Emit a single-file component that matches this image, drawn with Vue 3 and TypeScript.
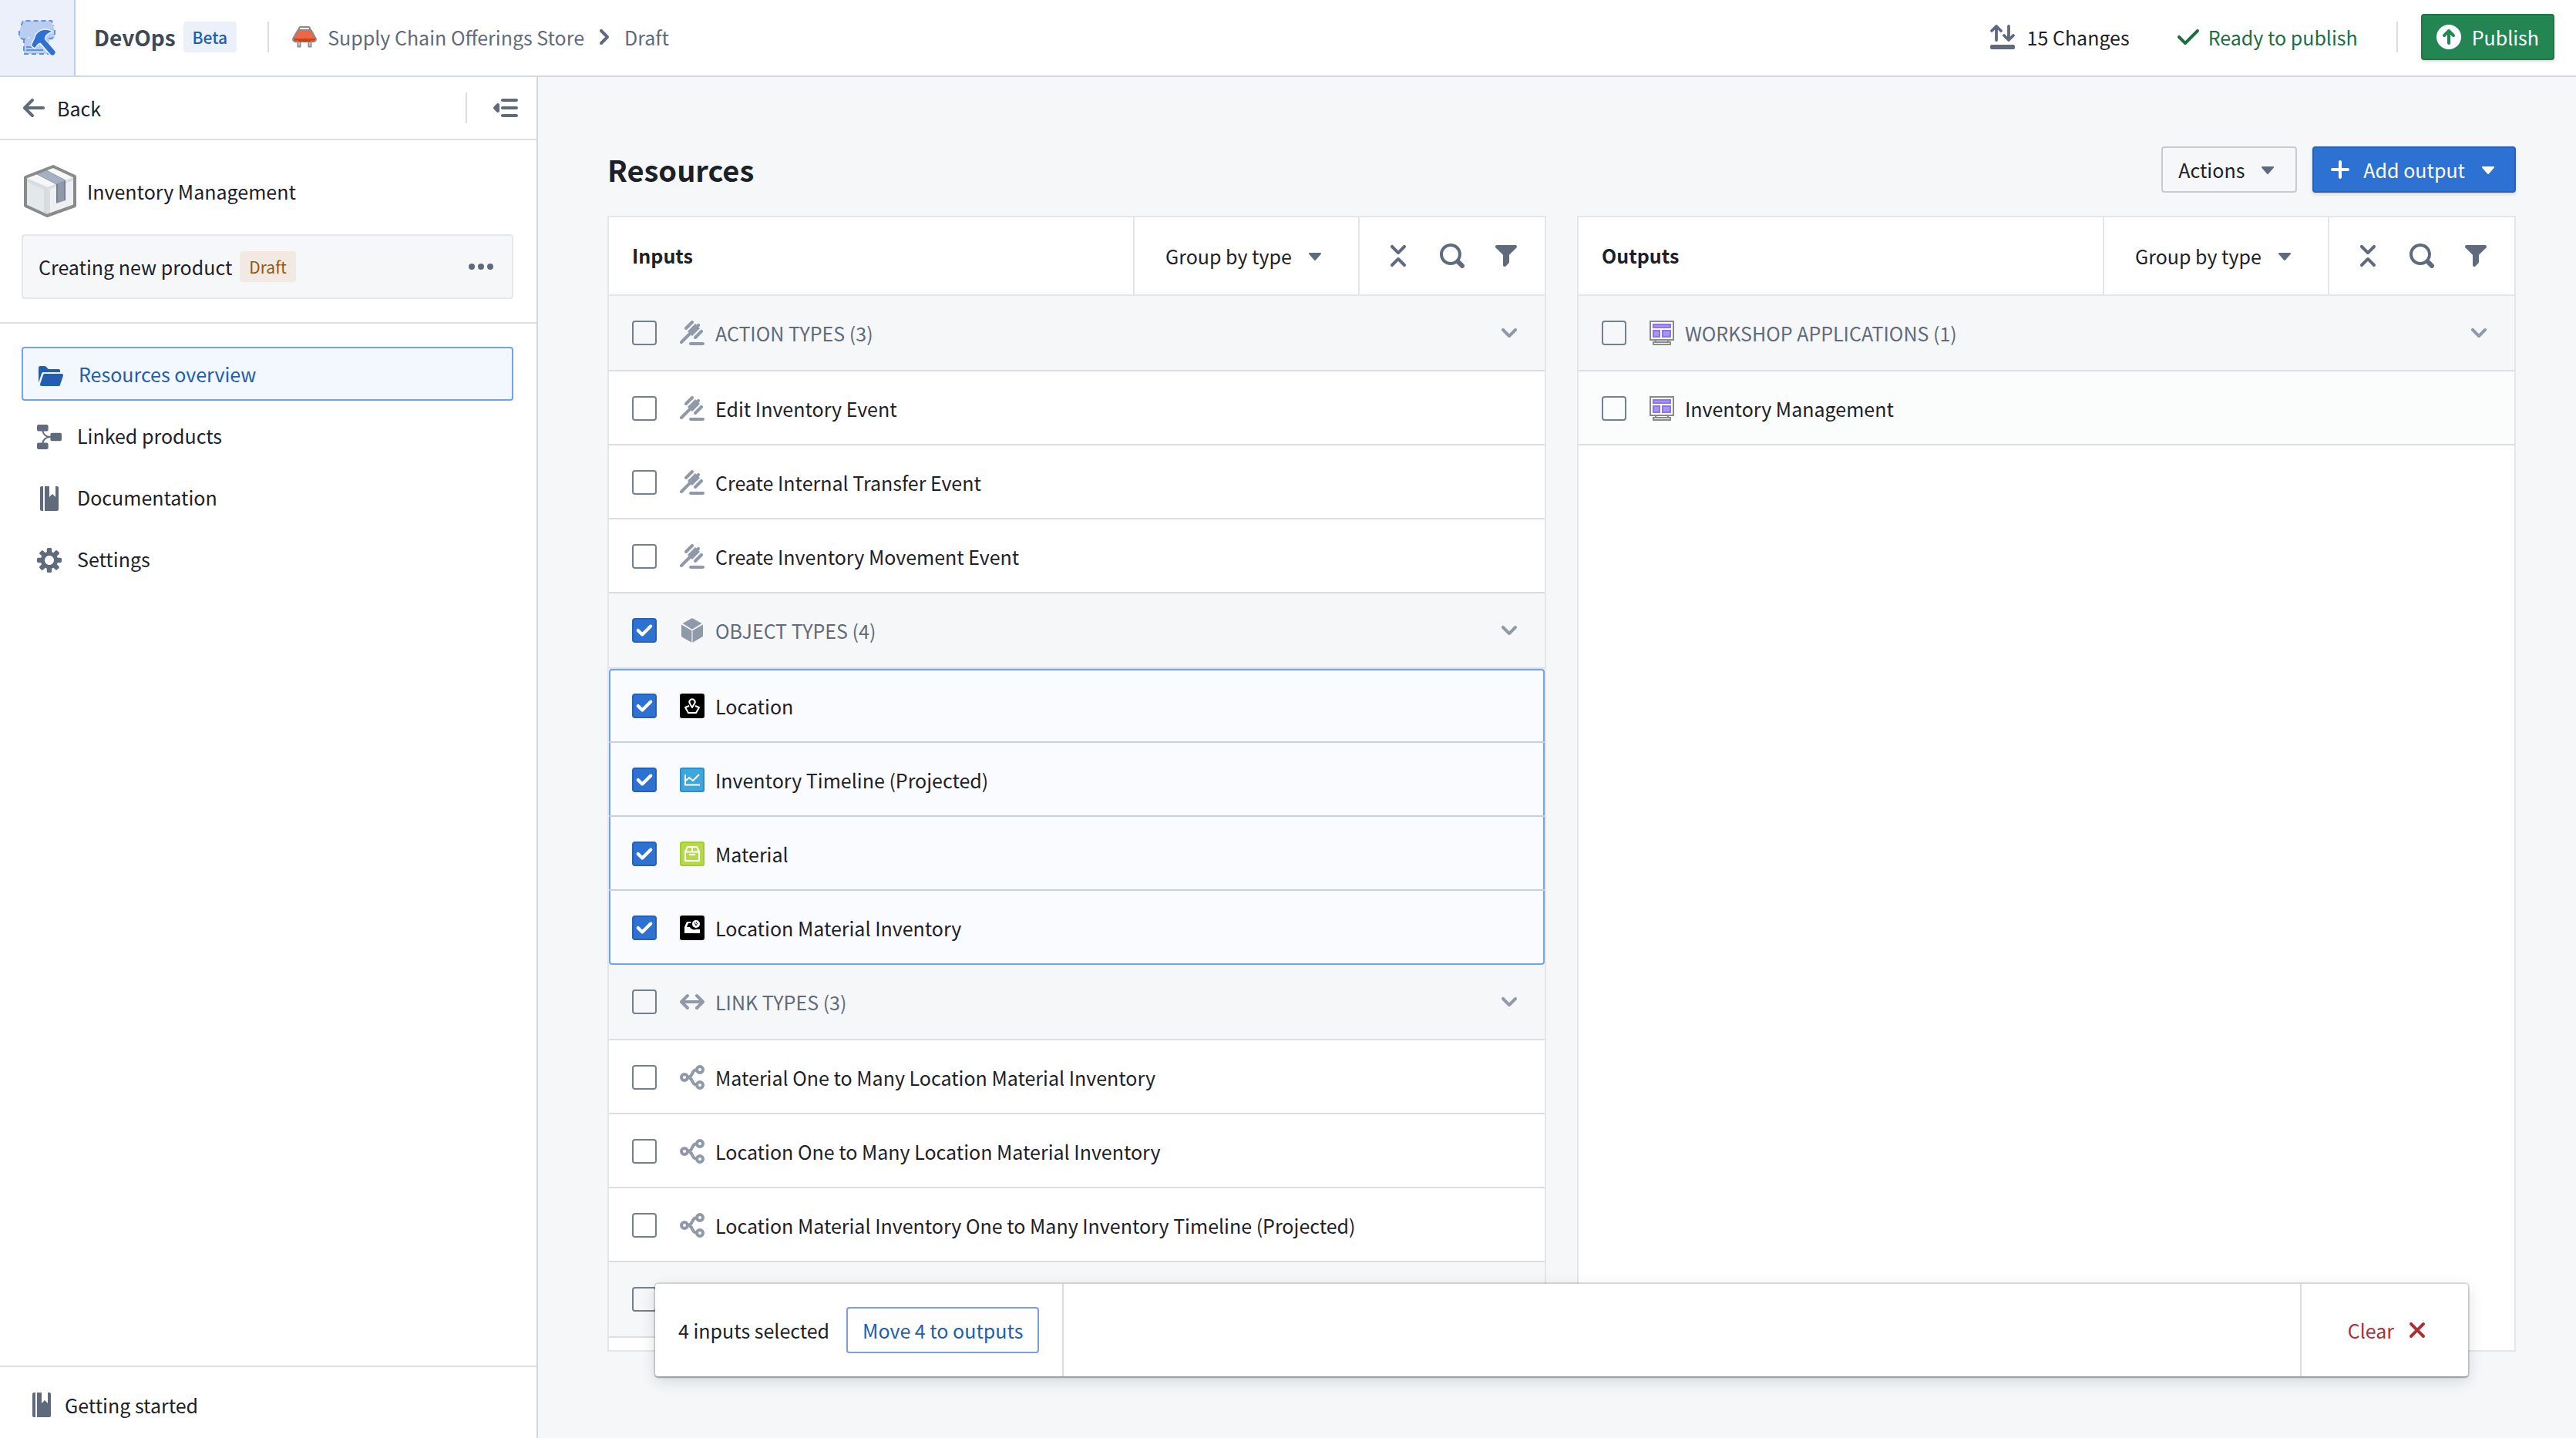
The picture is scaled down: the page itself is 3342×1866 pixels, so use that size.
<script setup lang="ts">
import { h, ref, computed, type FunctionalComponent } from 'vue'

interface IconShape {
  fill?: string
  stroke?: string
  width?: number
}

const shapes: Record<string, IconShape> = {
  arrowLeft: { fill: 'M13.99 6.99H4.41L7.7 3.7a1.003 1.003 0 00-1.42-1.42l-5 5a1.014 1.014 0 000 1.42l5 5a1.003 1.003 0 001.42-1.42L4.41 8.99H14c.55 0 1-.45 1-1s-.46-1-1.01-1z' },
  menuClosed: { fill: 'M6 4h9c.55 0 1-.45 1-1s-.45-1-1-1H6c-.55 0-1 .45-1 1s.45 1 1 1zM15 7H6c-.55 0-1 .45-1 1s.45 1 1 1h9c.55 0 1-.45 1-1s-.45-1-1-1zM15 12H6c-.55 0-1 .45-1 1s.45 1 1 1h9c.55 0 1-.45 1-1s-.45-1-1-1zM3 5c-.28 0-.53.11-.71.29l-2 2C.11 7.47 0 7.72 0 8s.11.53.29.71l2 2c.18.18.43.29.71.29.55 0 1-.45 1-1V6c0-.55-.45-1-1-1z' },
  chevronRight: { fill: 'M10.71 7.29l-4-4a1.003 1.003 0 00-1.42 1.42L8.59 8 5.3 11.29c-.19.18-.3.43-.3.71a1.003 1.003 0 001.71.71l4-4c.18-.18.29-.43.29-.71 0-.28-.11-.53-.29-.71z' },
  chevronDown: { fill: 'M12 5c-.28 0-.53.11-.71.29L8 8.59l-3.29-3.3a1.003 1.003 0 00-1.42 1.42l4 4c.18.18.43.29.71.29s.53-.11.71-.29l4-4A1.003 1.003 0 0012 5z' },
  caret: { fill: 'M12 6.5c0-.28-.22-.5-.5-.5h-7a.495.495 0 00-.37.83l3.5 4c.09.1.22.17.37.17s.28-.07.37-.17l3.5-4c.08-.09.13-.2.13-.33z' },
  search: { fill: 'M15.55 13.43l-2.67-2.68a6.94 6.94 0 001.11-3.76c0-3.87-3.13-7-7-7s-7 3.13-7 7 3.13 7 7 7c1.39 0 2.68-.42 3.76-1.11l2.68 2.67a1.498 1.498 0 102.12-2.12zm-8.56-1.44c-2.76 0-5-2.24-5-5s2.24-5 5-5 5 2.24 5 5-2.24 5-5 5z' },
  filter: { fill: 'M13.99.99h-12a1.003 1.003 0 00-.71 1.71l4.71 4.71V14a1.003 1.003 0 001.71.71l2-2c.18-.18.29-.43.29-.71V7.41L14.7 2.7a1.003 1.003 0 00-.71-1.71z' },
  collapse: { fill: 'M7.29 6.71c.18.18.43.29.71.29s.53-.11.71-.29l4-4a1.003 1.003 0 00-1.42-1.42L8 4.59l-3.29-3.3a1.003 1.003 0 00-1.42 1.42l4 4zm1.42 2.58C8.53 9.11 8.28 9 8 9s-.53.11-.71.29l-4 4a1.003 1.003 0 001.42 1.42L8 11.41l3.29 3.29c.18.19.43.3.71.3a1.003 1.003 0 00.71-1.71l-4-4z' },
  plus: { fill: 'M13 7H9V3c0-.55-.45-1-1-1s-1 .45-1 1v4H3c-.55 0-1 .45-1 1s.45 1 1 1h4v4c0 .55.45 1 1 1s1-.45 1-1V9h4c.55 0 1-.45 1-1s-.45-1-1-1z' },
  tick: { fill: 'M14 3c-.28 0-.53.11-.71.29L6 10.59l-3.29-3.3a1.003 1.003 0 00-1.42 1.42l4 4c.18.18.43.29.71.29s.53-.11.71-.29l8-8A1.003 1.003 0 0014 3z' },
  cross: { fill: 'M9.41 8l3.29-3.29c.19-.18.3-.43.3-.71a1.003 1.003 0 00-1.71-.71L8 6.59l-3.29-3.3a1.003 1.003 0 00-1.42 1.42L6.59 8 3.3 11.29c-.19.18-.3.43-.3.71a1.003 1.003 0 001.71.71L8 9.41l3.29 3.29c.18.19.43.3.71.3a1.003 1.003 0 00.71-1.71L9.41 8z' },
  cog: { fill: 'M15.19 6.39h-1.85c-.11-.37-.27-.71-.45-1.04l1.36-1.36c.31-.31.31-.82 0-1.13l-1.13-1.13a.803.803 0 00-1.13 0l-1.36 1.36c-.33-.17-.67-.33-1.04-.44V.79c0-.44-.36-.8-.8-.8h-1.6c-.44 0-.8.36-.8.8v1.86c-.39.12-.75.28-1.1.47l-1.3-1.3c-.3-.3-.79-.3-1.09 0L1.82 2.91c-.3.3-.3.79 0 1.09l1.3 1.3c-.2.34-.36.7-.48 1.09H.79c-.44 0-.8.36-.8.8v1.6c0 .44.36.8.8.8h1.85c.11.37.27.71.45 1.04l-1.36 1.36c-.31.31-.31.82 0 1.13l1.13 1.13c.31.31.82.31 1.13 0l1.36-1.36c.33.18.67.33 1.04.44v1.86c0 .44.36.8.8.8h1.6c.44 0 .8-.36.8-.8v-1.86c.39-.12.75-.28 1.1-.47l1.3 1.3c.3.3.79.3 1.09 0l1.09-1.09c.3-.3.3-.79 0-1.09l-1.3-1.3c.19-.35.36-.71.48-1.1h1.85c.44 0 .8-.36.8-.8v-1.6a.816.816 0 00-.81-.79zM8 11c-1.66 0-3-1.34-3-3s1.34-3 3-3 3 1.34 3 3-1.34 3-3 3z' },
  book: { fill: 'M2 1v14c0 .55.45 1 1 1h1V0H3c-.55 0-1 .45-1 1zm11-1h-1v7l-2-2-2 2V0H5v16h8c.55 0 1-.45 1-1V1c0-.55-.45-1-1-1z' },
  folderOpen: { fill: 'M2.06 6.73c.15-.42.54-.73 1-.73H14V5c0-.55-.45-1-1-1H6.41l-1.7-1.71A.997.997 0 004 2H1c-.55 0-1 .45-1 1v9.84l2.05-6.15.01.04zM16 7.95c0-.55-.45-.95-1-.95H4c-.43 0-.8.28-.94.66l-2 6 .01.01C1.03 13.78 1 13.88 1 14c0 .55.45 1 1 1h11c.43 0 .8-.28.94-.66l2-6h-.01c.04-.11.07-.22.07-.39z' },
  lineage: {
    fill: 'M1 0h5.3a1 1 0 011 1v2.2a1 1 0 01-1 1H1a1 1 0 01-1-1V1a1 1 0 011-1zM9.7 5.4H15a1 1 0 011 1v3.2a1 1 0 01-1 1H9.7a1 1 0 01-1-1V6.4a1 1 0 011-1zM1 11.8h5.3a1 1 0 011 1V15a1 1 0 01-1 1H1a1 1 0 01-1-1v-2.2a1 1 0 011-1z',
    stroke: 'M3.7 4C3.9 6 5.5 8 8.7 8M3.7 12C3.9 10 5.5 8 8.7 8',
    width: 1,
  },
  more: { fill: 'M2 6a2 2 0 100 4 2 2 0 000-4zM8 6a2 2 0 100 4 2 2 0 000-4zM14 6a2 2 0 100 4 2 2 0 000-4z' },
  changes: {
    fill: 'M1 13h14a1 1 0 011 1v1a1 1 0 01-1 1H1a1 1 0 01-1-1v-1a1 1 0 011-1z',
    stroke: 'M4 10V1.5M1 4l3-3 3 3M12 1v8.500M9 7l3 3 3-3',
    width: 1.9,
  },
  action: { fill: 'M9 11a1.003 1.003 0 001.71.71l4-4a1.003 1.003 0 00-1.42-1.42l-4 4c-.18.18-.29.43-.29.71zM4 6c.28 0 .53-.11.71-.29l4-4A1.003 1.003 0 007.29.29l-4 4A1.003 1.003 0 004 6zm4 4l5-5-.79-.79.5-.5a1.003 1.003 0 00-1.42-1.42l-.5.5L10 2 5 7l.79.79-5.5 5.5a1.003 1.003 0 001.42 1.42l5.5-5.5L8 10zm7 4H7c-.55 0-1 .45-1 1s.45 1 1 1h8c.55 0 1-.45 1-1s-.45-1-1-1z' },
  cube: { fill: 'M14.194 3.54L8 7.41 1.806 3.54 7.504.283a1 1 0 01.992 0l5.698 3.255zm.75.71a.99.99 0 01.056.329v6.842a1 1 0 01-.504.868L8.3 15.9V8.1l6.644-3.85zM1.056 4.25L7.7 8.1v7.8l-6.196-3.511A1 1 0 011 11.521V4.579a.99.99 0 01.056-.33z' },
  arrows: { fill: 'M15.7 7.3l-4-4c-.2-.2-.4-.3-.7-.3-.6 0-1 .5-1 1 0 .3.1.5.3.7L12.6 7H3.4l2.3-2.3c.2-.2.3-.4.3-.7 0-.5-.4-1-1-1-.3 0-.5.1-.7.3l-4 4c-.2.2-.3.4-.3.7s.1.5.3.7l4 4c.2.2.4.3.7.3.6 0 1-.4 1-1 0-.3-.1-.5-.3-.7L3.4 9h9.2l-2.3 2.3c-.2.2-.3.4-.3.7 0 .6.4 1 1 1 .3 0 .5-.1.7-.3l4-4c.2-.2.3-.4.3-.7s-.1-.5-.3-.7z' },
  link: {
    stroke: 'M5 8a2 2 0 11-4 0 2 2 0 014 0zM15 3a2 2 0 11-4 0 2 2 0 014 0zM15 13a2 2 0 11-4 0 2 2 0 014 0zM5 8h.5C8.5 8 7.5 3 11 3M5 8h.5c3 0 2 5 5.5 5',
    width: 2,
  },
}

const Icon: FunctionalComponent<{ name: string }> = (props) => {
  const shape = shapes[props.name]
  return h('svg', { viewBox: '0 0 16 16', class: 'icon', 'aria-hidden': 'true' }, [
    shape.fill ? h('path', { d: shape.fill, fill: 'currentColor' }) : null,
    shape.stroke
      ? h('path', {
          d: shape.stroke,
          fill: 'none',
          stroke: 'currentColor',
          'stroke-width': shape.width,
          'stroke-linecap': 'round',
          'stroke-linejoin': 'round',
        })
      : null,
  ])
}
Icon.props = ['name']

interface Item {
  name: string
  icon: string
  checked: boolean
}

interface Group {
  label: string
  icon: string
  checked: boolean
  items: Item[]
}

interface Panel {
  title: string
  kind: 'inputs' | 'outputs'
  groups: Group[]
}

const item = (name: string, icon: string, checked = false): Item => ({ name, icon, checked })

const panels = ref<Panel[]>([
  {
    title: 'Inputs',
    kind: 'inputs',
    groups: [
      {
        label: 'ACTION TYPES (3)',
        icon: 'action',
        checked: false,
        items: [
          item('Edit Inventory Event', 'action'),
          item('Create Internal Transfer Event', 'action'),
          item('Create Inventory Movement Event', 'action'),
        ],
      },
      {
        label: 'OBJECT TYPES (4)',
        icon: 'cube',
        checked: true,
        items: [
          item('Location', 'place', true),
          item('Inventory Timeline (Projected)', 'timeline', true),
          item('Material', 'box', true),
          item('Location Material Inventory', 'stock', true),
        ],
      },
      {
        label: 'LINK TYPES (3)',
        icon: 'arrows',
        checked: false,
        items: [
          item('Material One to Many Location Material Inventory', 'link'),
          item('Location One to Many Location Material Inventory', 'link'),
          item('Location Material Inventory One to Many Inventory Timeline (Projected)', 'link'),
        ],
      },
      { label: '', icon: '', checked: false, items: [] },
    ],
  },
  {
    title: 'Outputs',
    kind: 'outputs',
    groups: [
      {
        label: 'WORKSHOP APPLICATIONS (1)',
        icon: 'workshop',
        checked: false,
        items: [item('Inventory Management', 'workshop')],
      },
    ],
  },
])

const nav = [
  { label: 'Resources overview', icon: 'folderOpen', active: true },
  { label: 'Linked products', icon: 'lineage', active: false },
  { label: 'Documentation', icon: 'book', active: false },
  { label: 'Settings', icon: 'cog', active: false },
]

const selectedItems = computed(() => panels.value[0].groups.flatMap((g) => g.items).filter((i) => i.checked))

function toggleGroup(group: Group) {
  group.items.forEach((i) => (i.checked = group.checked))
}

function clearSelection() {
  panels.value[0].groups.forEach((g) => {
    g.checked = false
    toggleGroup(g)
  })
}
</script>

<template>
  <div class="app">
    <header class="topbar">
      <a href="#" class="logo" aria-label="DevOps home">
        <svg viewBox="0 0 48 46" aria-hidden="true">
          <path d="M7 24h33v20H7z" fill="#b8cdf0" />
          <path d="M6 1h37l4 14v4a6 6 0 01-12 2 6 6 0 01-11 0 6 6 0 01-11 0A6 6 0 011 19v-4z" fill="#b8cdf0" />
          <path d="M7 24v20h33M3.500 7L6 1h37l2.500 7M1 14v5a6 6 0 009 5M47 13v6a6 6 0 01-7 5v4" fill="none" stroke="#5f95dd" stroke-width="2" stroke-dasharray="6 4" />
          <path d="M10 35h8M10 39h22" stroke="#5f95dd" stroke-width="2" />
          <path d="M32 29l12 13" stroke="#ebf0fb" stroke-width="10" stroke-linecap="round" />
          <path d="M43 15C36 11 28 12 23 19l-2 5-4 9 4 3 4-5 6-3 3-4c0-4 3-7 9-9z" fill="#2d72d2" stroke="#ebf0fb" stroke-width="3" paint-order="stroke" stroke-linejoin="round" />
          <path d="M31 27l13 15" stroke="#2d72d2" stroke-width="7" stroke-linecap="round" />
        </svg>
      </a>
      <strong class="app-name">DevOps</strong>
      <span class="tag tag-blue">Beta</span>
      <span class="rule"></span>
      <nav class="crumbs" aria-label="Breadcrumb">
        <svg class="store" viewBox="0 0 32 28" aria-hidden="true">
          <path d="M7.5 19v7.500h3V19M21.5 19v7.500h3V19" fill="#fff" stroke="#8a8a8a" stroke-width="2" />
          <path d="M9 5V3c0-1 1-2 2-2h10c1 0 2 1 2 2v2" fill="#fff" stroke="#8a8a8a" stroke-width="2" />
          <path d="M7.5 5h17L31 16.500c0 3-3 4-5 3.500H6c-2 .5-5-.5-5-3.500z" fill="#eb6847" stroke="#8a8a8a" stroke-width="2" stroke-linejoin="round" />
          <path d="M2 16h28c0 2.500-3 4-5 2-2 3-4 3-5 1-1 2-6 2-7 0-1 2-4 2-6-1-2 2-5 .5-5-2z" fill="#d33d17" />
        </svg>
        <a href="#">Supply Chain Offerings Store</a>
        <Icon name="chevronRight" />
        <a href="#">Draft</a>
      </nav>
      <div class="top-actions">
        <button type="button" class="plain changes"><Icon name="changes" />15 Changes</button>
        <span class="ready"><Icon name="tick" />Ready to publish</span>
        <span class="rule"></span>
        <button type="button" class="btn btn-green">
          <svg class="icon" viewBox="0 0 16 16" aria-hidden="true">
            <circle cx="8" cy="8" r="8" fill="#fff" />
            <path d="M8 12V4.500M5 7l3-3 3 3" fill="none" stroke="#238551" stroke-width="2" stroke-linecap="round" stroke-linejoin="round" />
          </svg>
          Publish
        </button>
      </div>
    </header>

    <div class="body">
      <aside class="sidebar">
        <div class="back-row">
          <button type="button" class="plain back"><Icon name="arrowLeft" />Back</button>
          <span class="rule"></span>
          <button type="button" class="plain" aria-label="Collapse sidebar"><Icon name="menuClosed" /></button>
        </div>

        <section class="product">
          <div class="product-name">
            <svg viewBox="0 0 68 68" aria-hidden="true">
              <path d="M38 2l28 13v38L30 66 2 53V16z" fill="#edeff2" />
              <path d="M38 2l28 13-36 14L2 16z" fill="#f6f7f9" />
              <path d="M2 16l28 12v38L2 53z" fill="#e5e8eb" />
              <path d="M4 18l26 11 35-13v4L34 31v33l-4 1-4-2V32L4 22z" fill="#d3d8de" opacity=".75" />
              <path d="M17 12l12-5 25 13-12 5z" fill="#a5b0c0" stroke="#8f9db0" stroke-width="1" />
              <path d="M42 25l12-5v26l-12 4z" fill="#8f99a8" />
              <path d="M43 25v24M53 21v25" stroke="#738091" stroke-width="2" />
              <path d="M38 2l28 13v38L30 66 2 53V16z" fill="none" stroke="#8a8a8a" stroke-width="4" stroke-linejoin="round" />
            </svg>
            <span>Inventory Management</span>
          </div>
          <div class="draft-card">
            <span>Creating new product</span>
            <span class="tag tag-orange">Draft</span>
            <button type="button" class="plain more" aria-label="More"><Icon name="more" /></button>
          </div>
        </section>

        <nav class="nav" aria-label="Product">
          <a v-for="entry in nav" :key="entry.label" href="#" :class="{ active: entry.active }">
            <Icon :name="entry.icon" />{{ entry.label }}
          </a>
        </nav>

        <a href="#" class="getting-started"><Icon name="book" />Getting started</a>
      </aside>

      <main class="main">
        <div class="title-row">
          <h1>Resources</h1>
          <button type="button" class="btn btn-outline">Actions<Icon name="caret" /></button>
          <button type="button" class="btn btn-blue"><Icon name="plus" />Add output<Icon name="caret" /></button>
        </div>

        <div class="panels">
          <section v-for="panel in panels" :key="panel.title" class="panel" :class="panel.kind">
            <header class="panel-head">
              <h2>{{ panel.title }}</h2>
              <div class="group-by">
                <select :aria-label="panel.title + ' grouping'">
                  <option>Group by type</option>
                </select>
                <Icon name="caret" />
              </div>
              <div class="tools">
                <button type="button" class="plain" aria-label="Collapse all"><Icon name="collapse" /></button>
                <button type="button" class="plain" aria-label="Search"><Icon name="search" /></button>
                <button type="button" class="plain" aria-label="Filter"><Icon name="filter" /></button>
              </div>
            </header>

            <div v-for="(group, gi) in panel.groups" :key="gi" class="group">
              <div class="row group-head">
                <label>
                  <span class="check">
                    <input v-model="group.checked" type="checkbox" @change="toggleGroup(group)" />
                    <Icon name="tick" />
                  </span>
                  <svg v-if="group.icon === 'workshop'" class="icon" viewBox="0 0 32 32" aria-hidden="true">
                    <path d="M1 1h30v24H1z" fill="#fff" stroke="#8a8a8a" stroke-width="2" />
                    <path d="M4 4h24v6H4zM4 12h10v10H4zM16 12h12v10H16z" fill="#8f75e0" />
                    <path d="M6 6h20v2H6zM6 14h6v6H6zM18 14h8v6h-8z" fill="#a792f5" />
                    <path d="M12 25h-4v2M20 25h4v2M5 28h22v3H5z" fill="#fff" stroke="#8a8a8a" stroke-width="2" />
                  </svg>
                  <Icon v-else-if="group.icon" :name="group.icon" />
                  <span>{{ group.label }}</span>
                </label>
                <button type="button" class="plain" aria-label="Toggle group"><Icon name="chevronDown" /></button>
              </div>
              <ul v-if="group.items.length" :class="{ selected: group.items.every((i) => i.checked) }">
                <li v-for="entry in group.items" :key="entry.name" class="row">
                  <label>
                    <span class="check">
                      <input v-model="entry.checked" type="checkbox" />
                      <Icon name="tick" />
                    </span>
                    <svg v-if="entry.icon === 'workshop'" class="icon" viewBox="0 0 32 32" aria-hidden="true">
                      <path d="M1 1h30v24H1z" fill="#fff" stroke="#8a8a8a" stroke-width="2" />
                      <path d="M4 4h24v6H4zM4 12h10v10H4zM16 12h12v10H16z" fill="#8f75e0" />
                      <path d="M6 6h20v2H6zM6 14h6v6H6zM18 14h8v6h-8z" fill="#a792f5" />
                      <path d="M12 25h-4v2M20 25h4v2M5 28h22v3H5z" fill="#fff" stroke="#8a8a8a" stroke-width="2" />
                    </svg>
                    <svg v-else-if="entry.icon === 'place'" class="icon" viewBox="0 0 32 32" aria-hidden="true">
                      <rect width="32" height="32" rx="3" fill="#000" />
                      <path d="M16 18l-3-5a3.600 3.600 0 116 0z" fill="none" stroke="#fff" stroke-width="2" stroke-linejoin="round" />
                      <path d="M12 16l-5 2 4 7h10l4-7-5-2" fill="none" stroke="#fff" stroke-width="2" stroke-linejoin="round" />
                    </svg>
                    <svg v-else-if="entry.icon === 'timeline'" class="icon" viewBox="0 0 32 32" aria-hidden="true">
                      <rect x="1" y="1" width="30" height="30" rx="2" fill="#3fa6da" stroke="#2592cd" stroke-width="2" />
                      <path d="M7 9v13.500h19" fill="none" stroke="#fff" stroke-width="2" />
                      <path d="M8 17l4-4 5 4 8-8" fill="none" stroke="#fff" stroke-width="2" />
                    </svg>
                    <svg v-else-if="entry.icon === 'box'" class="icon" viewBox="0 0 32 32" aria-hidden="true">
                      <rect x="1" y="1" width="30" height="30" rx="2" fill="#b6d94c" stroke="#a4cd2e" stroke-width="2" />
                      <path d="M10 7h12l3 6v12H7V13zM7 13.500h18M16 7v6" fill="none" stroke="#fff" stroke-width="2" stroke-linejoin="round" />
                      <path d="M12 17h8" stroke="#fff" stroke-width="2" />
                    </svg>
                    <svg v-else-if="entry.icon === 'stock'" class="icon" viewBox="0 0 32 32" aria-hidden="true">
                      <rect width="32" height="32" rx="3" fill="#000" />
                      <path d="M9 8h6l-1 2h-3l-2 5h4c1 3 6 4 8 3h5v5H6v-8z" fill="#fff" />
                      <circle cx="21" cy="11" r="5" fill="#fff" />
                      <path d="M19 9l2 4M21 8l1 2M23 10l-2 3" stroke="#000" stroke-width="1" />
                    </svg>
                    <Icon v-else :name="entry.icon" />
                    <span>{{ entry.name }}</span>
                  </label>
                </li>
              </ul>
            </div>
          </section>
        </div>

        <div class="selection-bar" role="region" aria-label="Selection">
          <div class="selection-info">
            <span>{{ selectedItems.length }} inputs selected</span>
            <button type="button" class="btn btn-move">Move {{ selectedItems.length }} to outputs</button>
          </div>
          <div class="selection-clear">
            <button type="button" class="plain clear" @click="clearSelection">Clear<Icon name="cross" /></button>
          </div>
        </div>
      </main>
    </div>
  </div>
</template>

<style>
body {
  margin: 0;
  background: #f6f7f9;
}
</style>

<style scoped>
.app,
.app * {
  box-sizing: border-box;
}

.app {
  display: flex;
  flex-direction: column;
  min-height: 100vh;
  color: #1c2127;
  font-family: 'Noto Sans CJK SC', 'Open Sans', sans-serif;
  font-size: 25px;
  line-height: 36px;
}

button,
select {
  font: inherit;
  color: inherit;
}

a {
  color: inherit;
  text-decoration: none;
}

.icon {
  flex: none;
  display: block;
  width: 32px;
  height: 32px;
  color: #5f6b7c;
}

.plain {
  display: flex;
  align-items: center;
  padding: 0;
  border: 0;
  background: none;
  cursor: pointer;
}

.rule {
  width: 2px;
  height: 40px;
  background: #dcdcdd;
}

.tag {
  height: 40px;
  padding: 0 12px;
  border-radius: 4px;
  font-size: 21px;
  line-height: 40px;
}

.tag-blue {
  margin-left: 10px;
  background: #ebf0fb;
  color: #215db0;
  font-weight: 500;
}

.tag-orange {
  margin-left: 10px;
  background: #f2e9e3;
  color: #935610;
}

.btn {
  display: flex;
  align-items: center;
  height: 60px;
  border: 2px solid;
  border-radius: 4px;
  cursor: pointer;
}

/* top bar */
.topbar {
  display: flex;
  align-items: center;
  height: 100px;
  padding: 0 28px 4px 0;
  background: #fff;
  box-shadow: inset 0 -2px #d3d8de;
}

.logo {
  display: grid;
  place-items: center;
  align-self: flex-start;
  width: 98px;
  height: 98px;
  background: #ebf0fb;
  border-right: 2px solid #b8cdf0;
}

.logo svg {
  width: 48px;
  height: 46px;
}

.app-name {
  margin-left: 24px;
  font-size: 28px;
  font-weight: 700;
  color: #404854;
}

.topbar > .rule {
  margin-left: 40px;
}

.crumbs {
  display: flex;
  align-items: center;
  margin-left: 30px;
  color: #5f6b7c;
}

.store {
  width: 32px;
  height: 28px;
  margin-right: 14px;
}

.crumbs .icon {
  margin: 0 10px;
}

.top-actions {
  display: flex;
  align-items: center;
  margin-left: auto;
}

.changes,
.ready {
  display: flex;
  align-items: center;
  gap: 16px;
}

.ready {
  gap: 10px;
  margin: 0 50px 0 60px;
  color: #1c6e42;
}

.ready .icon {
  color: #1c6e42;
}

.btn-green {
  gap: 14px;
  margin-left: 30px;
  padding: 0 18px;
  background: #238551;
  border-color: #1f7748;
  color: #fff;
  box-shadow: 0 2px 4px rgba(17, 20, 24, 0.15);
}

/* side bar */
.body {
  display: flex;
  flex: 1;
}

.sidebar {
  flex: none;
  display: flex;
  flex-direction: column;
  width: 698px;
  background: #fff;
  border-right: 2px solid #d3d8de;
}

.back-row {
  display: flex;
  align-items: center;
  height: 82px;
  padding: 0 24px 0 28px;
  border-bottom: 2px solid #dce0e5;
}

.back {
  gap: 14px;
}

.back-row .rule {
  margin: 0 34px 0 auto;
}

.product {
  padding: 32px 30px 30px 28px;
  border-bottom: 2px solid #dce0e5;
}

.product-name {
  display: flex;
  align-items: center;
  gap: 14px;
}

.product-name svg {
  width: 68px;
  height: 68px;
  margin-left: 3px;
}

.draft-card {
  display: flex;
  align-items: center;
  height: 84px;
  margin-top: 22px;
  padding: 0 24px 0 20px;
  background: #f6f7f9;
  border: 2px solid #e5e8eb;
  border-radius: 4px;
}

.more {
  margin-left: auto;
}

.nav {
  display: flex;
  flex-direction: column;
  gap: 10px;
  padding: 30px 30px 30px 28px;
}

.nav a {
  display: flex;
  align-items: center;
  gap: 20px;
  height: 70px;
  padding: 0 20px;
  border-radius: 4px;
}

.nav .icon {
  margin-top: 4px;
}

.nav a.active {
  background: #f3f7fe;
  border: 2px solid #6fa3f0;
  color: #215db0;
}

.active .icon {
  color: #215db0;
}

.getting-started {
  display: flex;
  align-items: center;
  gap: 14px;
  height: 94px;
  margin-top: auto;
  padding: 6px 38px 0;
  border-top: 2px solid #dce0e5;
}

/* main area */
.main {
  position: relative;
  flex: 1;
  min-width: 0;
  display: flex;
  flex-direction: column;
  padding: 90px 78px 112px 90px;
}

.title-row {
  display: flex;
  align-items: center;
  gap: 20px;
  margin-bottom: 30px;
}

h1 {
  margin: 0 auto 0 0;
  font-size: 38px;
  line-height: 56px;
  font-weight: 700;
}

.btn-outline {
  gap: 14px;
  padding: 0 20px;
  background: #f6f7f9;
  border-color: #c8cacd;
}

.btn-blue {
  gap: 14px;
  padding: 0 18px;
  background: #2d72d2;
  border-color: #2661b5;
  color: #fff;
  box-shadow: 0 2px 4px rgba(17, 20, 24, 0.15);
}

.btn-blue .icon {
  color: #fff;
}

.panels {
  display: flex;
  flex: 1;
  gap: 40px;
}

.panel {
  flex: 1;
  min-width: 0;
  background: #fff;
  border: 2px solid #e5e6e8;
}

.panel-head {
  display: flex;
  height: 102px;
  border-bottom: 2px solid #e5e6e8;
}

h2 {
  margin: 0 auto 0 0;
  padding-left: 30px;
  font-size: 25px;
  line-height: 98px;
  font-weight: 700;
}

.group-by {
  display: flex;
  align-items: center;
  border-left: 2px solid #e5e6e8;
  padding: 0 40px 0 36px;
  gap: 10px;
}

.group-by select {
  appearance: none;
  padding: 0 4px;
  border: 0;
  background: none;
}

.tools {
  display: flex;
  align-items: center;
  gap: 38px;
  padding: 0 34px;
  border-left: 2px solid #e5e6e8;
}

.row {
  display: flex;
  align-items: center;
  height: 96px;
  padding: 0 30px;
  box-shadow: inset 0 -2px #dcdcdd;
}

.row label {
  display: flex;
  align-items: center;
  flex: 1;
}

.row label > .icon {
  margin: 0 14px 0 30px;
}

.row .icon {
  color: #8f99a8;
}

.group-head {
  height: 98px;
  padding-bottom: 2px;
  background: #f6f7f9;
  color: #5f6b7c;
  box-shadow: inset 0 -2px #dce0e5;
}

ul {
  margin: 0;
  padding: 0;
  list-style: none;
}

.outputs li {
  background: #fbfdfc;
}

.selected {
  background: #fafbff;
  border-radius: 4px;
  box-shadow: inset 0 0 0 2px #6fa3f0;
}

.selected .row {
  box-shadow: inset 0 -2px #c5cfe0;
}

.selected .row:last-child {
  box-shadow: none;
}

.check {
  display: grid;
  width: 32px;
  height: 32px;
}

.check input,
.check .icon {
  grid-area: 1 / 1;
}

.check input {
  appearance: none;
  width: 32px;
  height: 32px;
  margin: 0;
  border: 2px solid #738091;
  border-radius: 4px;
}

.check input:checked {
  background: #2d72d2;
  border-color: #2661b5;
}

.check .icon {
  visibility: hidden;
  place-self: center;
  width: 22px;
  height: 22px;
  color: #fff;
  stroke: #fff;
  pointer-events: none;
}

.check input:checked + .icon {
  visibility: visible;
}

/* floats over the panels */
.selection-bar {
  position: absolute;
  left: 152px;
  right: 140px;
  bottom: 80px;
  display: flex;
  justify-content: space-between;
  height: 120px;
  background: #fff;
  border-radius: 4px;
  box-shadow:
    0 0 0 2px rgba(17, 20, 24, 0.13),
    0 2px 2px rgba(17, 20, 24, 0.25),
    0 6px 20px rgba(17, 20, 24, 0.15);
}

.selection-info {
  display: flex;
  align-items: center;
  gap: 22px;
  padding: 0 30px;
  border-right: 2px solid #dcdcdd;
}

.btn-move {
  padding: 0 19px;
  background: #fff;
  border-color: #7d9fd6;
  color: #215db0;
}

.selection-clear {
  display: flex;
  align-items: center;
  padding: 0 50px 0 60px;
  border-left: 2px solid #dcdcdd;
}

.clear {
  gap: 14px;
  color: #ac2f33;
}

.clear .icon {
  color: #ac2f33;
}
</style>
